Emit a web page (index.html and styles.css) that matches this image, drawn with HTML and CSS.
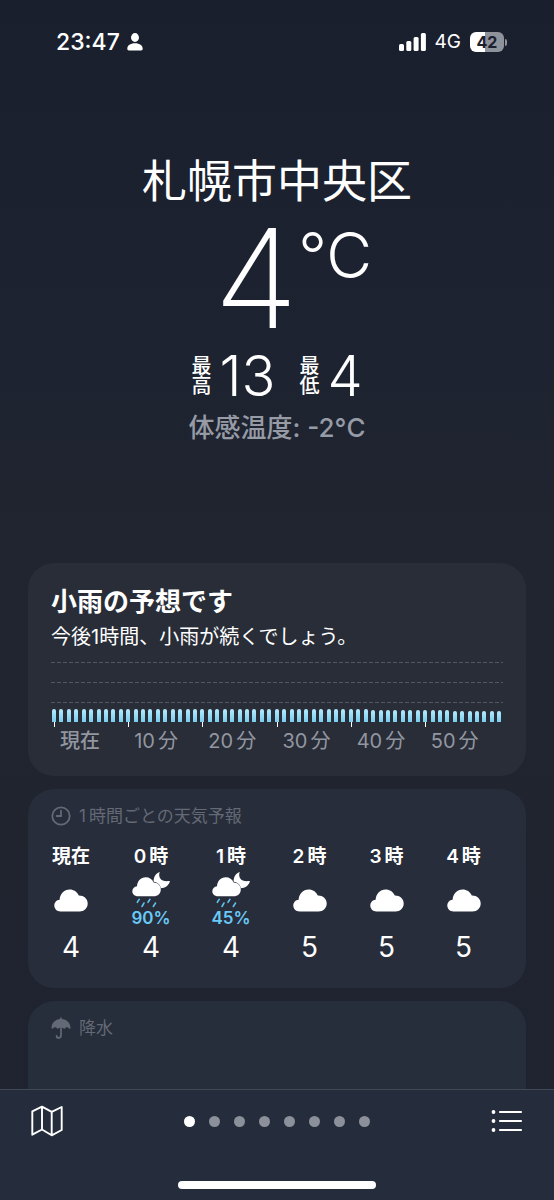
FILE: index.html
```html
<!DOCTYPE html>
<html lang="ja">
<head>
<meta charset="utf-8">
<meta name="viewport" content="width=device-width, initial-scale=1">
<title>天気</title>
<link rel="stylesheet" href="styles.css">
</head>
<body>
<svg class="sprite" aria-hidden="true">
  <symbol id="cloud" viewBox="0 0 34 23">
    <path d="M6.500 22.500C2.800 22.500.3 19.800.3 16.600c0-3.200 2.300-5.500 5.300-5.800C5.900 5 10 .5 15.600.5c4.200 0 7.500 2.200 9.200 6 5.100-.1 8.900 3.400 8.900 8 0 4.500-3.600 8-8.200 8z"/>
  </symbol>
  <symbol id="moonrain" viewBox="0 0 38 36">
    <path fill="#fff" d="M27.600.2c-1.500 5.200 1.300 9.800 9.300 8.900.8-.1 1.100.3.800 1-1.500 3.900-4.600 6.200-8.900 6.200-.4-3.500-3-5.900-7.100-6.500-.4-4.500 1.800-8 5.300-9.600.4-.2.700-.2.600 0z"/>
    <path fill="#fff" d="M6 24.300c-3.400 0-5.700-2.200-5.700-5 0-2.700 2-4.800 4.700-5.100.3-5.200 3.900-9 8.700-9 3.700 0 6.600 2 7.900 5.200 4.100 0 7.200 3 7.200 7 0 3.900-3.100 6.900-7.100 6.900z"/>
    <path stroke="#62bfea" stroke-width="1.600" stroke-linecap="round" d="M7.300 27.300 5.300 30.300M12 31l-2 3.500M18 27.300l-2 3M23.500 31l-2.200 3.500"/>
  </symbol>
</svg>

<header class="status">
  <div class="status-group">
    <span class="clock">23:47</span>
    <svg class="person" viewBox="0 0 16 18" aria-hidden="true"><ellipse cx="8" cy="4.500" rx="4" ry="4.400"/><path d="M.3 15.700c0-3.200 3-5.500 7.700-5.500s7.700 2.300 7.700 5.500c0 1-.6 1.700-1.600 1.700H1.900c-1 0-1.600-.7-1.600-1.700z"/></svg>
  </div>
  <div class="status-group status-right">
    <svg class="signal" viewBox="0 0 27 18" aria-hidden="true"><rect x="0" y="11" width="5" height="7" rx="1.500"/><rect x="7.300" y="8" width="5" height="10" rx="1.500"/><rect x="14.600" y="4" width="5" height="14" rx="1.500"/><rect x="21.900" y="0" width="5" height="18" rx="1.500"/></svg>
    <span class="network">4G</span>
    <span class="battery"><span class="battery-body">42</span><span class="battery-tip"></span></span>
  </div>
</header>

<main>
  <section class="current">
    <h1 class="city">札幌市中央区</h1>
    <p class="temp"><span class="temp-value">4</span><span class="temp-unit">°C</span></p>
    <dl class="range">
      <div class="range-item"><dt>最高</dt><dd>13</dd></div>
      <div class="range-item"><dt>最低</dt><dd>4</dd></div>
    </dl>
    <p class="feels">体感温度: -2°C</p>
  </section>

  <div class="cards">
    <section class="card rain">
      <h2 class="rain-title">小雨の予想です</h2>
      <p class="rain-text">今後1時間、小雨が続くでしょう。</p>
      <div class="chart">
        <div class="grid-line"></div><div class="grid-line"></div><div class="grid-line"></div>
        <div class="bars"><i></i><i></i><i></i><i></i><i></i><i></i><i></i><i></i><i></i><i></i><i></i><i></i><i></i><i></i><i></i><i></i><i></i><i></i><i></i><i></i><i></i><i></i><i></i><i></i><i></i><i></i><i></i><i></i><i></i><i></i><i></i><i></i><i></i><i></i><i></i><i></i><i></i><i></i><i></i><i></i><i></i><i></i><i></i><i></i><i></i><i></i><i></i><i></i><i></i><i></i><i></i><i></i><i></i><i></i><i></i><i></i><i></i><i></i><i></i><i></i><i></i></div>
      </div>
      <div class="axis"><span class="axis-now">現在</span><span>10<b>分</b></span><span>20<b>分</b></span><span>30<b>分</b></span><span>40<b>分</b></span><span>50<b>分</b></span></div>
    </section>

    <section class="card hourly">
      <h2 class="card-title">
        <svg class="title-icon" viewBox="0 0 20 20" fill="none" stroke="currentColor" stroke-width="1.800" stroke-linecap="round" aria-hidden="true"><circle cx="10" cy="10" r="8.700"/><path d="M10 4.700V10H5.700"/></svg>
        <span>1<b>時間ごとの天気予報</b></span>
      </h2>
      <div class="hours">
        <div class="hour wide"><span class="hour-name">現在</span><span class="sky"><svg class="cloud"><use href="#cloud"/></svg></span><span class="hour-temp">4</span></div>
        <div class="hour wide"><span class="hour-name">0<b>時</b></span><span class="sky"><svg class="moonrain"><use href="#moonrain"/></svg><span class="chance">90%</span></span><span class="hour-temp">4</span></div>
        <div class="hour wide"><span class="hour-name">1<b>時</b></span><span class="sky"><svg class="moonrain"><use href="#moonrain"/></svg><span class="chance">45%</span></span><span class="hour-temp">4</span></div>
        <div class="hour"><span class="hour-name">2<b>時</b></span><span class="sky"><svg class="cloud"><use href="#cloud"/></svg></span><span class="hour-temp">5</span></div>
        <div class="hour"><span class="hour-name">3<b>時</b></span><span class="sky"><svg class="cloud"><use href="#cloud"/></svg></span><span class="hour-temp">5</span></div>
        <div class="hour"><span class="hour-name">4<b>時</b></span><span class="sky"><svg class="cloud"><use href="#cloud"/></svg></span><span class="hour-temp">5</span></div>
      </div>
    </section>

    <section class="card precipitation">
      <h2 class="card-title">
        <svg class="title-icon" viewBox="0 0 20 22" aria-hidden="true"><path fill="currentColor" d="M9.200 2V1a.8.800 0 0 1 1.600 0v1c5 .4 8.700 4 8.700 9 0 .9-.9 1-1.400.4-1.300-1.500-3.200-1.500-4.300.1-.4.500-.8.500-1.200 0-1.300-1.500-3.900-1.500-5.200 0-.4.500-.8.500-1.200 0-1.100-1.600-3-1.600-4.300-.1-.5.600-1.400.5-1.400-.4 0-5 3.700-8.600 8.700-9z"/><path fill="none" stroke="currentColor" stroke-width="1.700" stroke-linecap="round" d="M10 10v8.600c0 1.500-.8 2.300-2.200 2.300s-2.200-.9-2.200-2"/></svg>
        降水
      </h2>
    </section>
  </div>
</main>

<footer class="toolbar">
  <div class="toolbar-row">
    <button class="tool" aria-label="マップ"><svg class="tool-icon" viewBox="0 0 32 32" fill="none" stroke="#fff" stroke-width="1.900" stroke-linejoin="round" aria-hidden="true"><path d="M1.300 6.300 11 1.700l9.700 5.200L30.700 2v23l-10 5.300L11 24.500 1.300 29.700zM11 1.700v22.800M20.700 6.900v23.400"/></svg></button>
    <div class="dots"><i class="on"></i><i></i><i></i><i></i><i></i><i></i><i></i><i></i></div>
    <button class="tool" aria-label="リスト"><svg class="tool-icon" viewBox="0 0 32 32" fill="#fff" aria-hidden="true"><circle cx="2.500" cy="7" r="1.900"/><circle cx="2.500" cy="16" r="1.900"/><circle cx="2.500" cy="25" r="1.900"/><path stroke="#fff" stroke-width="2.200" stroke-linecap="round" d="M9 7h21M9 16h21M9 25h21"/></svg></button>
  </div>
  <div class="home"></div>
</footer>
</body>
</html>
```

FILE: styles.css
```css
* { box-sizing: border-box; margin: 0; padding: 0; }
html { height: 100%; }
body {
  height: 100%;
  overflow: hidden;
  color: #fff;
  font-family: Inter, "Noto Sans CJK JP", sans-serif;
  background: linear-gradient(#1a1f2d 0, #1d2330 30%, #21252f 50%, #20242f 70%, #1f2331 100%);
}
svg { display: block; flex: none; }
b { font-weight: inherit; margin-left: 3px; }
.sprite { position: absolute; width: 0; height: 0; }

.status { display: flex; justify-content: space-between; align-items: center; height: 84px; padding: 0 47px 0 56px; }
.status-group { display: flex; align-items: center; gap: 7px; }
.status-right { gap: 9px; }
.clock { font-size: 23px; font-weight: 500; line-height: 28px; }
.person { width: 16px; height: 18px; fill: #fff; }
.signal { width: 27px; height: 18px; fill: #fff; }
.network { font-size: 19px; font-weight: 400; line-height: 24px; }
.battery { display: flex; align-items: center; gap: 1px; }
.battery-body {
  width: 34px; height: 20px; border-radius: 6px;
  background: linear-gradient(90deg, #fff 44%, #8e929a 44%);
  color: #1b202e; font-size: 16px; font-weight: 700; line-height: 20px; text-align: center;
}
.battery-tip { width: 2px; height: 7px; border-radius: 0 2px 2px 0; background: #8e929a; }

.current { display: flex; flex-direction: column; align-items: center; height: 479px; padding-top: 66px; }
.city { font-size: 45px; font-weight: 400; line-height: 64px; }
.temp { display: flex; align-items: flex-start; padding-left: 32px; line-height: 1; }
.temp-value { font-size: 138px; font-weight: 200; line-height: 128px; }
.temp-unit { font-size: 63px; font-weight: 300; line-height: 82px; }
.range { display: flex; gap: 24px; height: 52px; margin-top: 8px; align-items: center; }
.range-item { display: flex; align-items: center; gap: 8px; }
.range dt { width: 20px; font-size: 20px; font-weight: 500; line-height: 20px; }
.range dd { font-size: 56px; font-weight: 300; line-height: 52px; }
.feels { color: #969ba6; font-size: 26px; font-weight: 500; line-height: 36px; margin-top: 8px; }

.cards { display: flex; flex-direction: column; gap: 13px; padding: 0 28px; }
.card { border-radius: 26px; background: #272d3a; padding: 0 23px; }
.rain { height: 213px; padding-top: 21px; background: #282d38; }
.rain-title { font-size: 26px; font-weight: 700; line-height: 36px; }
.rain-text { font-size: 20px; font-weight: 400; line-height: 34px; }
.chart { display: flex; flex-direction: column; gap: 19px; padding-top: 8px; }
.grid-line { height: 1px; background: repeating-linear-gradient(90deg, #535762 0 4px, transparent 4px 6px); }
.bars { display: flex; justify-content: space-between; align-items: flex-end; height: 13px; margin: -13px 1px 0; }
.bars i { position: relative; width: 4px; height: 13px; border-radius: 2px 2px 0 0; background: linear-gradient(#b5ecff, #79cdec); }
.bars i:nth-child(n+44) { height: 12px; }
.bars i:nth-child(n+55) { height: 11px; }
.bars i:nth-child(10n+1):not(:last-child)::after { content: ""; position: absolute; left: 2px; top: 100%; width: 1px; height: 5px; background: #fff; }
.axis { display: grid; grid-template-columns: repeat(6, 1fr); padding: 4px 0 0 9px; margin-right: -2px; color: #9296a0; font-size: 20px; line-height: 30px; }
.axis-now { font-weight: 500; }

.card-title { display: flex; align-items: center; gap: 8px; color: #636975; font-size: 17px; font-weight: 400; line-height: 26px; }
.title-icon { width: 20px; height: 22px; }
.hourly { height: 199px; padding-top: 14px; }
.hours { display: flex; gap: 40px; padding-top: 14px; }
.hour { display: flex; flex-direction: column; align-items: center; width: 37px; white-space: nowrap; }
.wide { width: 40px; }
.hour-name { font-size: 19px; font-weight: 600; line-height: 28px; }
.sky { display: flex; flex-direction: column; align-items: center; justify-content: center; height: 58px; }
.cloud { width: 34px; height: 23px; fill: #fff; }
.moonrain { width: 38px; height: 36px; }
.chance { color: #69c9f7; font-size: 17px; font-weight: 600; line-height: 20px; }
.hour-temp { font-size: 28px; font-weight: 400; line-height: 36px; }
.precipitation { height: 199px; padding-top: 14px; background: #262d3b; }

.toolbar { position: fixed; left: 0; right: 0; bottom: 0; height: 111px; border-top: 1px solid #424956; background: #252d3c; }
.toolbar-row { display: flex; justify-content: space-between; align-items: center; padding: 15px 31px 0; }
.tool { border: 0; background: none; cursor: pointer; }
.tool-icon { width: 32px; height: 32px; }
.dots { display: flex; gap: 14px; }
.dots i { width: 11px; height: 11px; border-radius: 50%; background: #8b909a; }
.dots .on { background: #fff; }
.home { width: 198px; height: 8px; margin: 44px auto 0; border-radius: 4px; background: #fff; }
```
